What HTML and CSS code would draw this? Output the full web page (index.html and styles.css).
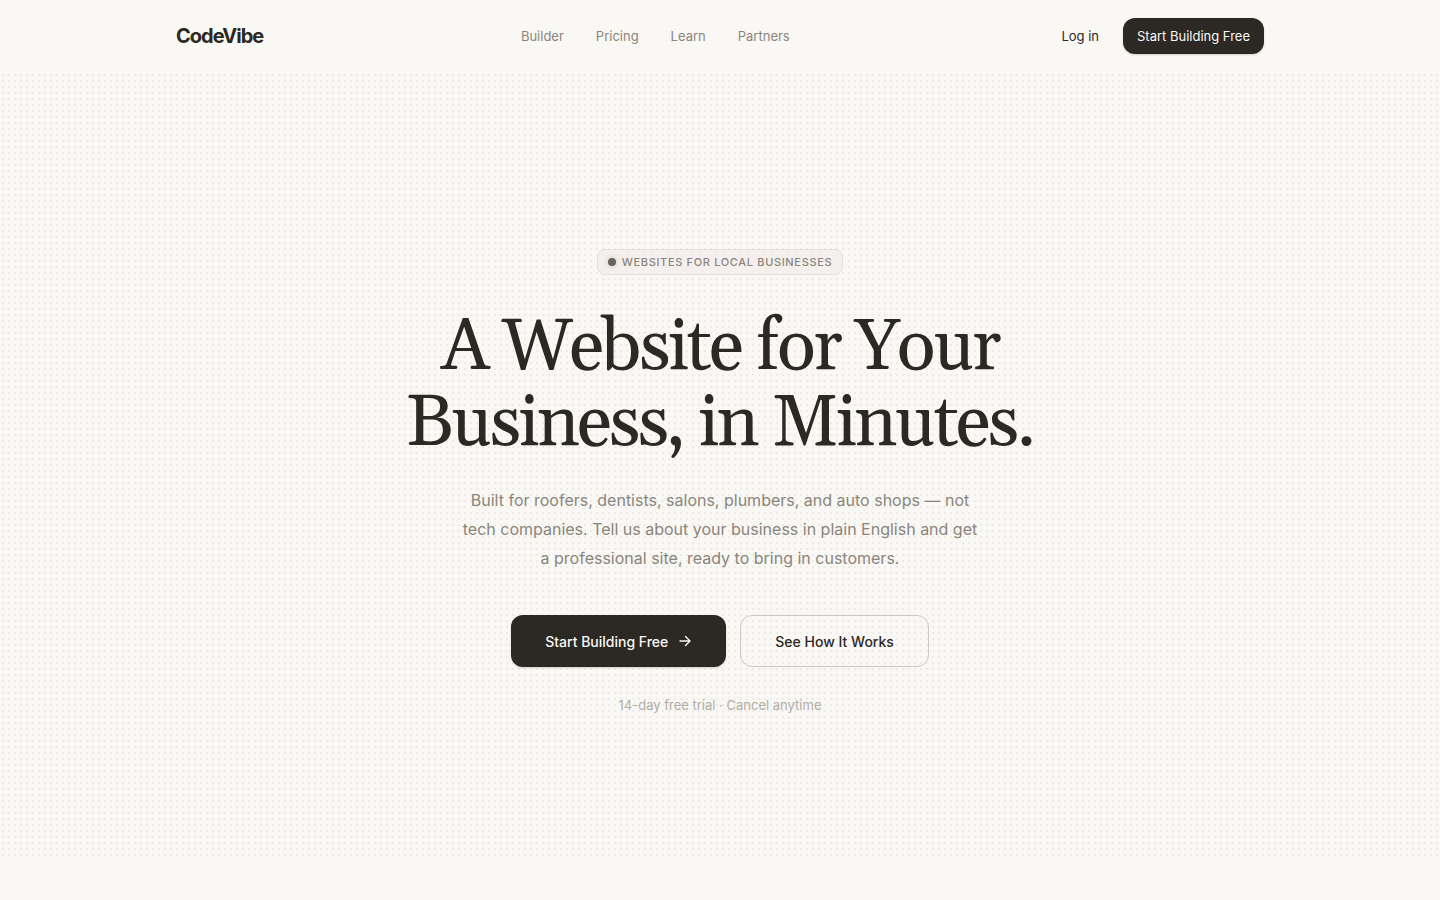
FILE: index.html
```html
<!DOCTYPE html>
<html lang="en">
<head>
    <meta charset="UTF-8">
    <meta name="viewport" content="width=device-width, initial-scale=1.0">
    <title>CodeVibe</title>
    <link rel="stylesheet" href="styles.css">
</head>
<body>
    <header class="header">
        <div class="container header-inner">
            <a class="logo" href="#">CodeVibe</a>
            <nav class="nav">
                <a href="#">Builder</a>
                <a href="#">Pricing</a>
                <a href="#">Learn</a>
                <a href="#">Partners</a>
            </nav>
            <div class="header-actions">
                <a class="login" href="#">Log in</a>
                <a class="btn btn-primary btn-small" href="#">Start Building Free</a>
            </div>
        </div>
    </header>

    <main class="hero">
        <p class="badge"><span class="badge-dot"></span>Websites for Local Businesses</p>
        <h1>A Website for Your Business, in Minutes.</h1>
        <p class="lead">Built for roofers, dentists, salons, plumbers, and auto shops — not tech companies. Tell us about your business in plain English and get a professional site, ready to bring in customers.</p>
        <div class="cta">
            <a class="btn btn-primary" href="#">
                Start Building Free
                <svg width="14" height="14" viewBox="0 0 14 14" fill="none" stroke="currentColor" stroke-width="1.4" stroke-linecap="round" stroke-linejoin="round" aria-hidden="true">
                    <path d="M2 7h10M7.500 2.500L12 7l-4.500 4.500"/>
                </svg>
            </a>
            <a class="btn btn-outline" href="#">See How It Works</a>
        </div>
        <p class="note">14-day free trial · Cancel anytime</p>
    </main>
</body>
</html>
```
FILE: styles.css
```css
* {
    margin: 0;
    padding: 0;
    box-sizing: border-box;
}

body {
    font-family: Inter, 'Liberation Sans', sans-serif;
    background: #faf8f4;
    color: #2c2824;
    min-height: 100vh;
    -webkit-font-smoothing: antialiased;
}

a {
    color: inherit;
    text-decoration: none;
}

.container {
    max-width: 1152px;
    margin: 0 auto;
    padding: 0 32px;
}

.header-inner {
    display: flex;
    align-items: center;
    justify-content: space-between;
    height: 72px;
}

.logo {
    font-size: 20px;
    font-weight: 700;
    letter-spacing: -1px;
}

.nav {
    display: flex;
    gap: 32px;
    font-size: 13px;
    color: #8a857d;
}

.header-actions {
    display: flex;
    align-items: center;
    gap: 10px;
    font-size: 13px;
}

.login {
    padding: 8px 14px;
}

.btn {
    display: inline-flex;
    align-items: center;
    gap: 10px;
    height: 52px;
    padding: 0 34px;
    border-radius: 12px;
    font-size: 14px;
    font-weight: 500;
}

.btn-primary {
    background: #2c2824;
    color: #faf8f4;
    box-shadow: 0 1px 2px rgba(44, 40, 36, 0.2);
}

.btn-outline {
    border: 1px solid #cbc9c5;
}

.btn-small {
    height: 36px;
    padding: 0 14px;
    font-size: 13px;
    font-weight: 400;
}

.hero {
    display: flex;
    flex-direction: column;
    align-items: center;
    padding: 177px 32px 144px;
    text-align: center;
    background: radial-gradient(circle, #edebe7 1px, transparent 1px) 0 0 / 6px 6px;
}

.badge {
    display: flex;
    align-items: center;
    gap: 6px;
    height: 26px;
    margin-bottom: 35px;
    padding: 0 10px;
    border: 1px solid #e4e1dd;
    border-radius: 8px;
    background: rgba(243, 239, 236, 0.85);
    color: #8a857d;
    font-size: 11px;
    font-weight: 500;
    letter-spacing: 0.06em;
    text-transform: uppercase;
}

.badge-dot {
    width: 8px;
    height: 8px;
    border-radius: 50%;
    background: #68645d;
    box-shadow: 0 0 6px rgba(104, 100, 93, 0.3);
}

h1 {
    max-width: 720px;
    margin-bottom: 24px;
    font-family: Georgia, Gelasio, 'Liberation Serif', serif;
    font-size: 72px;
    font-weight: 400;
    line-height: 76px;
    letter-spacing: -0.035em;
}

.lead {
    max-width: 520px;
    margin-bottom: 42px;
    color: #8a857d;
    font-size: 16px;
    line-height: 29px;
}

.cta {
    display: flex;
    flex-wrap: wrap;
    justify-content: center;
    gap: 14px;
    margin-bottom: 30px;
}

.note {
    color: #b0aca6;
    font-size: 13px;
    line-height: 16px;
}

@media (max-width: 768px) {
    .nav {
        display: none;
    }

    .hero {
        padding: 80px 20px;
    }

    h1 {
        font-size: 44px;
        line-height: 48px;
    }
}
```
